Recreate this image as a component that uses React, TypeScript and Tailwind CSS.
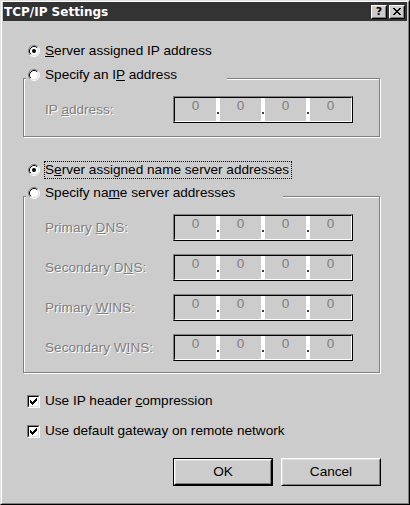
import { Fragment } from "react";

const sans = "font-['Liberation_Sans',Arial,sans-serif]";
const dim = "text-[#808080] [text-shadow:1px_1px_0_#fff]";

function Radio({ checked = false }: { checked?: boolean }) {
  return (
    <svg width="12" height="12" viewBox="0 0 12 12" className="shrink-0">
      <circle cx="6" cy="6" r="5" fill="#fff" />
      <path d="M2.11 9.89A5.5 5.5 0 0 1 9.89 2.11" fill="none" stroke="#808080" />
      <path d="M9.89 2.11A5.5 5.5 0 0 1 2.11 9.89" fill="none" stroke="#fff" />
      <path d="M2.82 9.18A4.5 4.5 0 0 1 9.18 2.82" fill="none" stroke="#000" />
      <path d="M9.18 2.82A4.5 4.5 0 0 1 2.82 9.18" fill="none" stroke="#dfdfdf" />
      {checked && <circle cx="6" cy="6" r="2" fill="#000" />}
    </svg>
  );
}

function Check() {
  return (
    <div className="h-[13px] w-[13px] shrink-0 border border-t-[#808080] border-l-[#808080] border-r-white border-b-white">
      <div className="h-full w-full border border-t-black border-l-black border-r-[#dfdfdf] border-b-[#dfdfdf] bg-white">
        <svg width="9" height="9" viewBox="0 0 9 9" shapeRendering="crispEdges">
          <path
            d="M7 1h1v1H7zM6 2h2v1H6zM1 3h1v1H1zM5 3h3v1H5zM1 4h2v1H1zM4 4h3v1H4zM1 5h5v1H1zM2 6h3v1H2zM3 7h1v1H3z"
            fill="#000"
          />
        </svg>
      </div>
    </div>
  );
}

function IpField() {
  return (
    <div className="flex h-[27px] w-[180px] border border-t-[#808080] border-l-[#808080] border-r-black border-b-black">
      <div className="flex flex-1 border border-t-black border-l-black border-r-white border-b-white">
        {[0, 1, 2, 3].map((i) => (
          <Fragment key={i}>
            {i > 0 && (
              <div className="w-[4px] bg-white pl-px pt-[14px]">
                <div className="h-[2px] w-[2px] bg-[#404040]" />
              </div>
            )}
            <div className="flex-1 text-center leading-4 text-[#808080]">0</div>
          </Fragment>
        ))}
      </div>
    </div>
  );
}

function FieldRow({ label }: { label: React.ReactNode }) {
  return (
    <div className="flex h-[27px] items-center pl-[21px]">
      <span className={`w-[128px] pt-px ${dim}`}>{label}</span>
      <IpField />
    </div>
  );
}

function TitleButton({ children }: { children: React.ReactNode }) {
  return (
    <div className="h-[14px] w-[16px] border border-t-white border-l-white border-r-black border-b-black bg-[#cccccc]">
      <div className="flex h-full w-full items-center justify-center border border-t-transparent border-l-transparent border-r-[#808080] border-b-[#808080]">
        {children}
      </div>
    </div>
  );
}

export default function App() {
  return (
    <div className={`h-[505px] w-[410px] border border-t-[#e0e0e0] border-l-[#e0e0e0] border-r-black border-b-black ${sans}`}>
      <div className="flex h-full flex-col border border-t-white border-l-white border-r-[#808080] border-b-[#808080] bg-[#cccccc] px-px text-[13.6px] leading-4 text-black">
        <div className="flex h-[19px] shrink-0 items-center justify-between bg-[#333333] pl-px pr-[2px]">
          <span className="font-['DejaVu_Sans',Verdana,sans-serif] text-[12px] font-bold text-white">
            TCP/IP Settings
          </span>
          <div className="flex gap-[2px]">
            <TitleButton>
              <span className="font-['DejaVu_Sans',sans-serif] text-[11px] leading-none font-bold">?</span>
            </TitleButton>
            <TitleButton>
              <svg width="8" height="7" viewBox="0 0 8 7" shapeRendering="crispEdges">
                <path
                  d="M0 0h2v1H0zM6 0h2v1H6zM1 1h2v1H1zM5 1h2v1H5zM2 2h4v1H2zM3 3h2v1H3zM2 4h4v1H2zM1 5h2v1H1zM5 5h2v1H5zM0 6h2v1H0zM6 6h2v1H6z"
                  fill="#000"
                />
              </svg>
            </TitleButton>
          </div>
        </div>

        <div className="flex flex-col">
          <div className="ml-[25px] mt-[22px] flex items-center gap-[5px]">
            <Radio checked />
            <span>
              <u>S</u>erver assigned IP address
            </span>
          </div>

          <fieldset className="ml-[20px] mt-[8px] w-[357px] border border-[#808080] pb-[13px] shadow-[inset_1px_1px_0_#fff,1px_1px_0_#fff]">
            <legend className="ml-[2px] h-[23px] w-[201px] bg-[#cccccc] pl-[2px]">
              <div className="flex items-center gap-[5px]">
                <Radio />
                <span>
                  Specify an I<u>P</u> address
                </span>
              </div>
            </legend>
            <div className="mt-[6px]">
              <FieldRow
                label={
                  <>
                    IP <u>a</u>ddress:
                  </>
                }
              />
            </div>
          </fieldset>

          <div className="ml-[25px] mt-[24px] flex items-center gap-[4px]">
            <Radio checked />
            <span className="border border-dotted border-black pr-[2px]">
              S<u>e</u>rver assigned name server addresses
            </span>
          </div>

          <fieldset className="ml-[20px] mt-[6px] w-[357px] border border-[#808080] pb-[11px] shadow-[inset_1px_1px_0_#fff,1px_1px_0_#fff]">
            <legend className="ml-[2px] h-[23px] w-[257px] bg-[#cccccc] pl-[2px]">
              <div className="flex items-center gap-[5px]">
                <Radio />
                <span>
                  Specify na<u>m</u>e server addresses
                </span>
              </div>
            </legend>
            <div className="mt-[6px] flex flex-col gap-[13px]">
              <FieldRow
                label={
                  <>
                    Primary <u>D</u>NS:
                  </>
                }
              />
              <FieldRow
                label={
                  <>
                    Secondary D<u>N</u>S:
                  </>
                }
              />
              <FieldRow
                label={
                  <>
                    Primary <u>W</u>INS:
                  </>
                }
              />
              <FieldRow
                label={
                  <>
                    Secondary W<u>I</u>NS:
                  </>
                }
              />
            </div>
          </fieldset>

          <div className="ml-[24px] mt-[20px] flex items-center gap-[5px]">
            <Check />
            <span>
              Use IP header <u>c</u>ompression
            </span>
          </div>
          <div className="ml-[24px] mt-[14px] flex items-center gap-[5px]">
            <Check />
            <span>
              Use default <u>g</u>ateway on remote network
            </span>
          </div>

          <div className="ml-[170px] mt-[19px] flex gap-[8px]">
            <button className="h-[28px] w-[100px] border border-black">
              <div className="h-full w-full border border-t-white border-l-white border-r-black border-b-black">
                <div className="flex h-full w-full items-center justify-center border border-t-[#dfdfdf] border-l-[#dfdfdf] border-r-[#808080] border-b-[#808080]">
                  OK
                </div>
              </div>
            </button>
            <button className="h-[28px] w-[100px] border border-t-white border-l-white border-r-black border-b-black">
              <div className="flex h-full w-full items-center justify-center border border-t-[#dfdfdf] border-l-[#dfdfdf] border-r-[#808080] border-b-[#808080]">
                Cancel
              </div>
            </button>
          </div>
        </div>
      </div>
    </div>
  );
}
